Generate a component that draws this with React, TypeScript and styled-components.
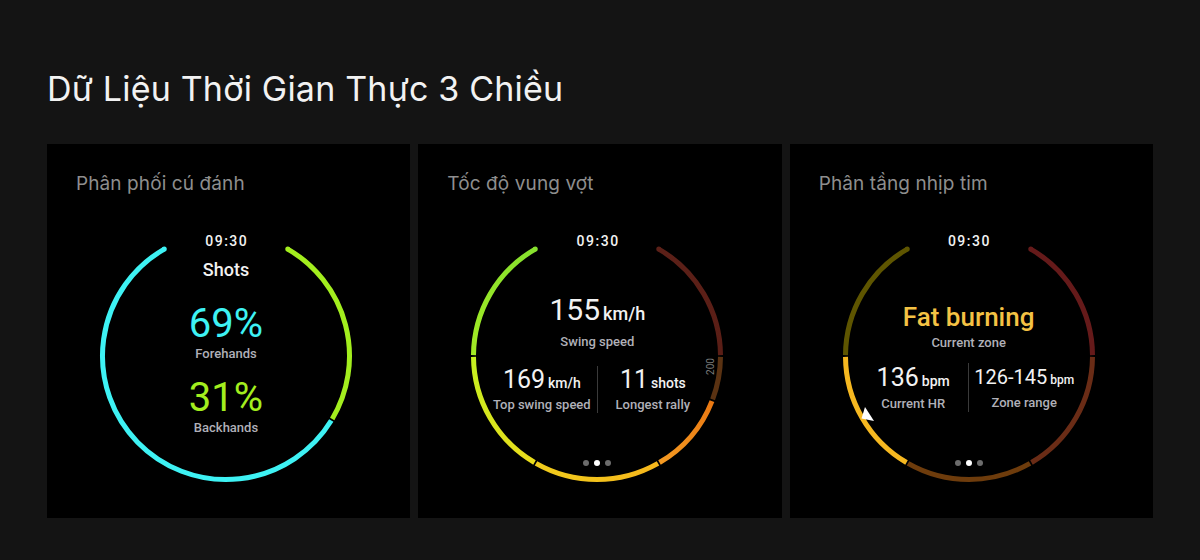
import React, { useId } from 'react';
import styled, { createGlobalStyle } from 'styled-components';

const GlobalStyle = createGlobalStyle`
  html, body { margin: 0; padding: 0; background: #141414; }
  body {
    width: 1200px;
    height: 560px;
    overflow: hidden;
    font-family: Inter, "Liberation Sans", sans-serif;
  }
`;

const Page = styled.main`
  padding: 69px 47px 0 47px;
`;

const Heading = styled.h1`
  margin: 0;
  font-family: Inter, "Liberation Sans", sans-serif;
  font-weight: 400;
  font-size: 34px;
  line-height: 40px;
  color: #f2f2f2;
  letter-spacing: 0.2px;
`;

const CardGrid = styled.section`
  margin-top: 35px;
  width: 1106px;
  display: grid;
  grid-template-columns: repeat(3, 1fr);
  gap: 8px;
`;

const Card = styled.article`
  background: #000;
  height: 374px;
  box-sizing: border-box;
  padding: 28px 0 0 29px;
  display: flex;
  flex-direction: column;
`;

const CardTitle = styled.h2`
  margin: 0;
  font-family: Inter, "Liberation Sans", sans-serif;
  font-weight: 400;
  font-size: 19px;
  line-height: 24px;
  color: #8e8e8e;
  letter-spacing: 0.1px;
`;

const Watch = styled.div`
  position: relative;
  width: 260px;
  height: 260px;
  margin: 30px 0 0 20px;
`;

const RingSvg = styled.svg`
  position: absolute;
  inset: 0;
  width: 260px;
  height: 260px;
`;

const Face = styled.div`
  position: relative;
  height: 100%;
  box-sizing: border-box;
  padding-top: 7px;
  display: flex;
  flex-direction: column;
  align-items: center;
  font-family: Roboto, "Liberation Sans", sans-serif;
  color: #f2f2f2;
`;

const Time = styled.div`
  font-size: 14px;
  line-height: 16px;
  font-weight: 500;
  letter-spacing: 1.5px;
  padding-left: 1.5px;
`;

const FaceTitle = styled.div<{ $mt: number }>`
  margin-top: ${(p) => p.$mt}px;
  font-size: 18px;
  line-height: 22px;
  font-weight: 500;
`;

const Value = styled.div<{ $size: number; $lh: number; $mt?: number; $color?: string; $weight?: number }>`
  margin-top: ${(p) => p.$mt ?? 0}px;
  font-size: ${(p) => p.$size}px;
  line-height: ${(p) => p.$lh}px;
  font-weight: ${(p) => p.$weight ?? 400};
  color: ${(p) => p.$color ?? '#f2f2f2'};
  white-space: nowrap;
`;

const Unit = styled.span<{ $size: number }>`
  font-size: ${(p) => p.$size}px;
  font-weight: 500;
  margin-left: 3px;
`;

const Label = styled.div<{ $mt?: number }>`
  margin-top: ${(p) => p.$mt ?? 0}px;
  font-size: 13px;
  line-height: 16px;
  font-weight: 500;
  color: #b0b0b8;
  white-space: nowrap;
`;

const SplitRow = styled.div<{ $mt: number }>`
  margin-top: ${(p) => p.$mt}px;
  display: grid;
  grid-template-columns: 110px 1px 110px;
`;

const Column = styled.div`
  display: flex;
  flex-direction: column;
  align-items: center;
`;

const Divider = styled.div`
  background: #3a3a3a;
  width: 1px;
`;

const Dots = styled.div`
  position: absolute;
  top: 234px;
  left: 50%;
  transform: translateX(-50%);
  display: flex;
  gap: 5px;
`;

const Dot = styled.span<{ $active?: boolean }>`
  width: 6px;
  height: 6px;
  border-radius: 50%;
  background: ${(p) => (p.$active ? '#ffffff' : '#6c6c6c')};
`;

const CX = 130;
const CY = 130;
const R = 123.5;
const SW = 5;

const pt = (deg: number, r = R): [number, number] => {
  const a = (deg * Math.PI) / 180;
  return [CX + r * Math.sin(a), CY - r * Math.cos(a)];
};

const arcPath = (a1: number, a2: number) => {
  const [x1, y1] = pt(a1);
  const [x2, y2] = pt(a2);
  const large = a2 - a1 > 180 ? 1 : 0;
  return `M ${x1.toFixed(2)} ${y1.toFixed(2)} A ${R} ${R} 0 ${large} 1 ${x2.toFixed(2)} ${y2.toFixed(2)}`;
};

type Segment = { from: number; to: number; c: [string, string]; cap?: 'start' | 'end' };

const Ring: React.FC<{ segments: Segment[]; children?: React.ReactNode }> = ({ segments, children }) => {
  const uid = useId().replace(/:/g, '');
  return (
    <RingSvg viewBox="0 0 260 260">
      <defs>
        {segments.map((s, i) => {
          const [x1, y1] = pt(s.from);
          const [x2, y2] = pt(s.to);
          return (
            <linearGradient key={i} id={`${uid}g${i}`} gradientUnits="userSpaceOnUse" x1={x1} y1={y1} x2={x2} y2={y2}>
              <stop offset="0" stopColor={s.c[0]} />
              <stop offset="1" stopColor={s.c[1]} />
            </linearGradient>
          );
        })}
      </defs>
      {segments.map((s, i) => (
        <path key={i} d={arcPath(s.from, s.to)} fill="none" stroke={`url(#${uid}g${i})`} strokeWidth={SW} />
      ))}
      {segments.map((s, i) => {
        if (!s.cap) return null;
        const [x, y] = pt(s.cap === 'start' ? s.from : s.to);
        return <circle key={`c${i}`} cx={x} cy={y} r={SW / 2} fill={s.cap === 'start' ? s.c[0] : s.c[1]} />;
      })}
      {children}
    </RingSvg>
  );
};

const shotSegments: Segment[] = [
  { from: 30, to: 120.7, c: ['#a3ee1e', '#a3ee1e'], cap: 'start' },
  { from: 121.5, to: 330, c: ['#3ef2f4', '#3ef2f4'], cap: 'end' },
];

const speedSegments: Segment[] = [
  { from: 30, to: 89.6, c: ['#5c2018', '#5a1e16'], cap: 'start' },
  { from: 90.4, to: 110.6, c: ['#5a3212', '#5a3212'] },
  { from: 111.4, to: 149.6, c: ['#ea7812', '#f49a22'] },
  { from: 150.4, to: 209.6, c: ['#f6b71c', '#f0cc1c'] },
  { from: 210.4, to: 269.6, c: ['#eadc1c', '#c4f020'] },
  { from: 270.4, to: 330, c: ['#a2ea24', '#86e02e'], cap: 'end' },
];

const heartSegments: Segment[] = [
  { from: 30, to: 89.6, c: ['#651a1a', '#651a1a'], cap: 'start' },
  { from: 90.4, to: 149.6, c: ['#6a2c16', '#6a2c16'] },
  { from: 150.4, to: 209.6, c: ['#6e3c0c', '#6e3c0c'] },
  { from: 210.4, to: 269.6, c: ['#f6b820', '#f6b820'] },
  { from: 270.4, to: 330, c: ['#5e5500', '#5e5500'], cap: 'end' },
];

const PageDots: React.FC = () => (
  <Dots>
    <Dot />
    <Dot $active />
    <Dot />
  </Dots>
);

export default function App() {
  return (
    <>
      <GlobalStyle />
      <Page>
        <Heading>Dữ Liệu Thời Gian Thực 3 Chiều</Heading>
        <CardGrid>
          <Card>
            <CardTitle>Phân phối cú đánh</CardTitle>
            <Watch>
              <Ring segments={shotSegments} />
              <Face>
                <Time>09:30</Time>
                <FaceTitle $mt={10}>Shots</FaceTitle>
                <Value $size={40} $lh={44} $mt={21} $color="#3ef2f4">69%</Value>
                <Label>Forehands</Label>
                <Value $size={40} $lh={44} $mt={14} $color="#a3ee1e">31%</Value>
                <Label>Backhands</Label>
              </Face>
            </Watch>
          </Card>

          <Card>
            <CardTitle>Tốc độ vung vợt</CardTitle>
            <Watch>
              <Ring segments={speedSegments}>
                <text
                  x={243.5}
                  y={140.5}
                  transform="rotate(-90 243.5 140.5)"
                  textAnchor="middle"
                  dominantBaseline="central"
                  fontSize={10}
                  fontFamily="Roboto, sans-serif"
                  fill="#7a7a7a"
                >
                  200
                </text>
              </Ring>
              <Face>
                <Time>09:30</Time>
                <Value $size={30} $lh={34} $mt={44}>
                  155<Unit $size={18}>km/h</Unit>
                </Value>
                <Label $mt={3}>Swing speed</Label>
                <SplitRow $mt={16}>
                  <Column>
                    <Value $size={25} $lh={28}>
                      169<Unit $size={14}>km/h</Unit>
                    </Value>
                    <Label>Top swing speed</Label>
                  </Column>
                  <Divider />
                  <Column>
                    <Value $size={25} $lh={28}>
                      11<Unit $size={14}>shots</Unit>
                    </Value>
                    <Label>Longest rally</Label>
                  </Column>
                </SplitRow>
                <PageDots />
              </Face>
            </Watch>
          </Card>

          <Card>
            <CardTitle>Phân tầng nhịp tim</CardTitle>
            <Watch>
              <Ring segments={heartSegments}>
                <polygon points="26,181 22.5,192.5 35,195" fill="#ffffff" />
              </Ring>
              <Face>
                <Time>09:30</Time>
                <Value $size={26} $lh={30} $mt={53} $color="#f4c244" $weight={500}>
                  Fat burning
                </Value>
                <Label $mt={3}>Current zone</Label>
                <SplitRow $mt={12}>
                  <Column>
                    <Value $size={25} $lh={29}>
                      136<Unit $size={14}>bpm</Unit>
                    </Value>
                    <Label>Current HR</Label>
                  </Column>
                  <Divider />
                  <Column>
                    <Value $size={20} $lh={29}>
                      126-145<Unit $size={12}>bpm</Unit>
                    </Value>
                    <Label>Zone range</Label>
                  </Column>
                </SplitRow>
                <PageDots />
              </Face>
            </Watch>
          </Card>
        </CardGrid>
      </Page>
    </>
  );
}
